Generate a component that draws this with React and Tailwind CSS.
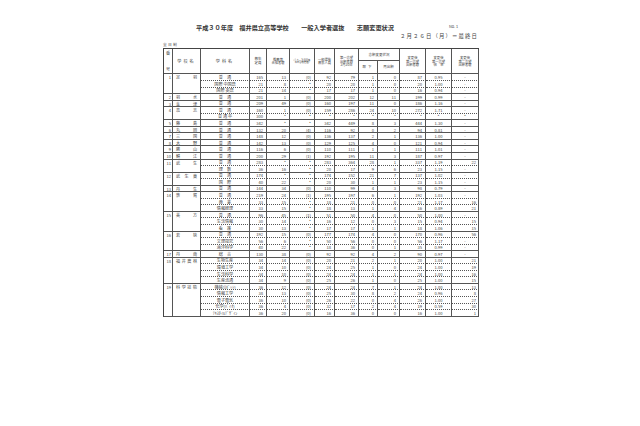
import React from "react";

const schools = [
  [1, "足　羽", [["普　通","165","13","(0)","92","79","1","0","87","0.95","-"],["国際 中国語","21","8","*","20","20","1","0","20","1.00","-"],["国際 英語","21","14","*","17","17","1","0","16","0.94","-"]]],
  [2, "羽　水", [["普　通","201","1","(0)","200","202","12","11","199","0.99","-"]]],
  [3, "金　津", [["普　通","209","49","(0)","160","197","11","0","186","1.16","-"]]],
  [4, "高　志", [["普　通","160","1","(0)","159","286","24","10","272","1.71","-"],["普 通 卒","300","*","*","*","*","*","*","*","*","*"]]],
  [5, "藤　島", [["普　通","342","*","*","342","449","8","3","444","1.30","-"]]],
  [6, "丸　岡", [["普　通","132","20","(4)","116","92","0","2","94","0.81","-"]]],
  [7, "三　国", [["普　通","148","12","(0)","136","137","2","1","136","1.00","-"]]],
  [8, "大　野", [["普　通","142","13","(0)","129","125","4","0","121","0.94","-"]]],
  [9, "勝　山", [["普　通","116","6","(0)","110","111","1","1","111","1.01","-"]]],
  [10, "鯖　江", [["普　通","200","29","(1)","192","195","11","3","187","0.97","-"]]],
  [11, "武　生", [["普　通","283","*","*","283","364","28","1","337","1.19","22"],["理　数","36","16","*","20","17","9","6","23","1.15","-"]]],
  [12, "武生東", [["普　通","174","*","*","174","152","21","7","137","1.02","-"],["国　際","40","22","*","20","30","1","1","23","1.15","-"]]],
  [13, "丹　生", [["普　通","144","34","(0)","110","99","4","3","98","0.79","-"]]],
  [14, "敦　賀", [["普　通","219","24","(1)","195","197","6","1","192","1.03","-"],["商　業","33","15","*","18","21","0","0","21","1.17","16"],["情報経理","33","15","*","18","13","1","4","16","0.89","21"]]],
  [15, "美　方", [["普　通","96","45","(1)","51","50","4","0","50","1.00","-"],["生活情報","30","14","*","16","12","0","3","15","0.94","15"],["看　護","30","13","*","17","17","1","1","18","1.06","15"]]],
  [16, "若　狭", [["普　通","192","15","(0)","177","174","4","0","170","0.96","56"],["文理探究","56","6","*","50","56","0","0","56","1.17","-"],["海洋科学","40","22","*","18","36","0","1","35","0.99","-"]]],
  [17, "丹　南", [["総　合","130","38","(0)","92","92","4","2","90","0.97","-"]]],
  [18, "福井農林", [["生物生産","34","14","(0)","20","21","2","1","20","1.00","21"],["環境工学","34","10","(0)","24","25","1","0","24","1.00","19"],["生活科学","34","10","(0)","24","24","1","1","24","1.00","16"],["生産流通","34","9","(0)","25","26","1","0","25","1.00","15"]]],
  [19, "科学技術", [["機械(ﾛﾎﾞｯﾄ)","36","12","(0)","24","24","7","1","24","1.00","13"],["情報工学","38","13","(0)","25","30","8","2","24","0.96","8"],["電子電気","36","10","(0)","26","22","0","4","26","1.00","27"],["化学(ﾊﾞｲｵ)","36","4","(0)","32","17","2","4","19","0.59","30"],["ﾃｷｽﾀｲﾙﾃﾞｻﾞｲﾝ","36","20","(0)","16","36","0","0","16","1.00","1"]]],
];

const cell = "border-r border-b border-[#555] p-0 leading-none align-middle";
const hcell = "border-r border-b border-[#555] p-0 leading-[1.15] text-center align-middle font-normal";

function Stack({ lines }) {
  return (
    <div className="flex flex-col items-center">
      {lines.map((l, i) => (
        <span key={i}>{l}</span>
      ))}
    </div>
  );
}

export default function App() {
  return (
    <div className="w-[640px] h-[426px] bg-white text-[#444] font-['Noto_Sans_CJK_JP','Noto_Sans',sans-serif] overflow-hidden">
      <div className="w-[315px] ml-[163px] pt-[25px] flex flex-col">
        <div className="flex items-start">
          <div className="ml-[33px] text-[6.2px] font-bold leading-none whitespace-nowrap text-[#333]">
            平成３０年度　福井県立高等学校　　一般入学者選抜　　志願変更状況
          </div>
          <div className="ml-auto mr-[20px] text-[3.8px] leading-none">No. 1</div>
        </div>
        <div className="flex justify-end mt-[3px] text-[5.4px] tracking-[1.1px] leading-none whitespace-nowrap">
          ２月２６日（月）＝最終日
        </div>
        <div className="mt-[3px] mb-[2px] text-[3.8px] leading-none tracking-[1.2px]">全日制</div>
        <table className="border-separate border-spacing-0 table-fixed w-[315px] border-l border-t border-[#444] text-[4.1px]">
          <colgroup>
            <col className="w-[9px]" />
            <col className="w-[28px]" />
            <col className="w-[49px]" />
            <col className="w-[17px]" />
            <col className="w-[23px]" />
            <col className="w-[25px]" />
            <col className="w-[20px]" />
            <col className="w-[24px]" />
            <col className="w-[19px]" />
            <col className="w-[22px]" />
            <col className="w-[26px]" />
            <col className="w-[26px]" />
            <col className="w-[27px]" />
          </colgroup>
          <thead>
            <tr className="h-[12px]">
              <th rowSpan={2} className={hcell}>
                <div className="flex flex-col justify-between items-center h-[23px] py-[1px]">
                  <span>番</span>
                  <span>号</span>
                </div>
              </th>
              <th rowSpan={2} className={hcell + " tracking-[2px]"}>学校名</th>
              <th rowSpan={2} className={hcell + " tracking-[2px]"}>学科名</th>
              <th rowSpan={2} className={hcell + " text-[3.5px]"}>
                <Stack lines={["募集", "定員"]} />
              </th>
              <th rowSpan={2} className={hcell + " text-[3.3px]"}>
                <Stack lines={["推薦等", "合格者数"]} />
              </th>
              <th rowSpan={2} className={hcell + " text-[2.3px]"}>
                <Stack lines={["(うち、全国募集", "等の合格者数)"]} />
              </th>
              <th rowSpan={2} className={hcell + " text-[3.3px]"}>
                <Stack lines={["一般選抜", "募集人員"]} />
              </th>
              <th rowSpan={2} className={hcell + " text-[3.3px]"}>
                <Stack lines={["第一志望", "出願者数", "2月20日"]} />
              </th>
              <th colSpan={2} className={hcell + " text-[3.5px]"}>志願変更状況</th>
              <th rowSpan={2} className={hcell + " text-[3.3px]"}>
                <Stack lines={["変更後", "第一志望", "出願者数"]} />
              </th>
              <th rowSpan={2} className={hcell + " text-[3.3px]"}>
                <Stack lines={["変更後", "第一志望", "倍　率"]} />
              </th>
              <th rowSpan={2} className={hcell + " text-[3.3px]"}>
                <Stack lines={["変更後", "第二志望", "出願者数"]} />
              </th>
            </tr>
            <tr className="h-[13px]">
              <th className={hcell + " text-[3.5px] tracking-[2px]"}>取下</th>
              <th className={hcell + " text-[3.5px]"}>再出願</th>
            </tr>
          </thead>
          <tbody>
            {schools.map(([no, name, rows]) =>
              rows.map((r, i) => {
                const last = i === rows.length - 1;
                const sep = last ? "" : " [border-bottom-style:dotted]";
                return (
                  <tr key={no + "-" + i} className="h-[6.55px]">
                    {i === 0 && (
                      <>
                        <td rowSpan={rows.length} className={cell + " align-top text-right pr-[1px] pt-[1px]"}>
                          {no}
                        </td>
                        <td rowSpan={rows.length} className={cell + " align-top pt-[1px]"}>
                          <div className="flex justify-between px-[3px]">
                            {name.replace(/　/g, "").split("").map((c, k) => (
                              <span key={k}>{c}</span>
                            ))}
                          </div>
                        </td>
                      </>
                    )}
                    <td className={cell + sep + " text-center whitespace-nowrap overflow-hidden"}>{r[0]}</td>
                    {r.slice(1).map((v, k) => {
                      let align = "text-right pr-[3px]";
                      if (k === 8) align = "text-center";
                      if (k === 9) align = v === "-" || v === "*" ? "text-center" : "text-right pr-[2px]";
                      return (
                        <td key={k} className={cell + sep + " " + align}>
                          {v}
                        </td>
                      );
                    })}
                  </tr>
                );
              })
            )}
          </tbody>
        </table>
      </div>
    </div>
  );
}
